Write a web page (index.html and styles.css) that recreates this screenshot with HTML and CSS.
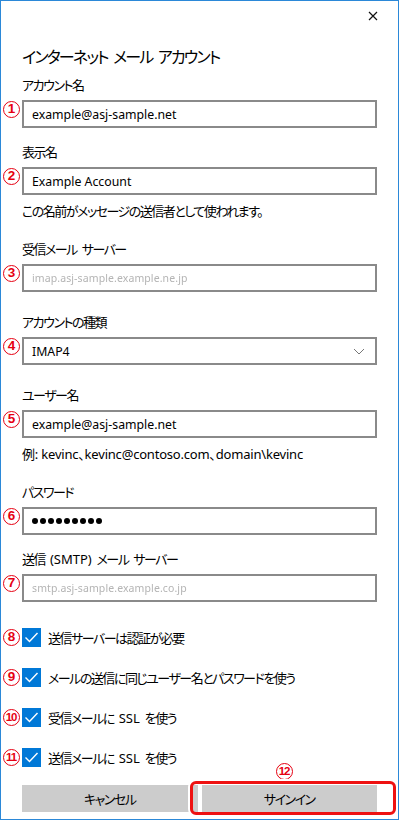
FILE: index.html
```html
<!DOCTYPE html>
<html>
    <head>
        <title>インターネット メール アカウント</title>
        <meta name="viewport" content="width=device-width, initial-scale=1.0">
        <link rel="stylesheet" href="styles.css">
    </head>
    <body>
        <div class="window">
            <div class="titlebar">
                <button class="close" aria-label="閉じる">
                    <svg width="10" height="10" viewBox="0 0 10 10"><path d="M1 1 L9 9 M9 1 L1 9" stroke="#111" stroke-width="1.2" fill="none"/></svg>
                </button>
            </div>
            <h1 class="title">インターネット メール アカウント</h1>

            <div class="field">
                <label class="label">アカウント名</label>
                <div class="box"><span class="mark">1</span><span class="value">example@asj-sample.net</span></div>
            </div>

            <div class="field">
                <label class="label">表示名</label>
                <div class="box"><span class="mark">2</span><span class="value">Example Account</span></div>
            </div>
            <p class="note">この名前がメッセージの送信者として使われます。</p>

            <div class="field">
                <label class="label">受信メール サーバー</label>
                <div class="box"><span class="mark">3</span><span class="value blurred">imap.asj-sample.example.ne.jp</span></div>
            </div>

            <div class="field loose">
                <label class="label">アカウントの種類</label>
                <div class="box select"><span class="mark">4</span><span class="value">IMAP4</span>
                    <svg class="chevron" width="12" height="7" viewBox="0 0 12 7"><path d="M1 1 L6 6 L11 1" stroke="#777" stroke-width="1" fill="none"/></svg>
                </div>
            </div>

            <div class="field loose">
                <label class="label">ユーザー名</label>
                <div class="box"><span class="mark">5</span><span class="value">example@asj-sample.net</span></div>
            </div>
            <p class="note hint">例: kevinc、kevinc@contoso.com、domain\kevinc</p>

            <div class="field">
                <label class="label">パスワード</label>
                <div class="box"><span class="mark">6</span>
                    <span class="dots"><i></i><i></i><i></i><i></i><i></i><i></i><i></i><i></i><i></i></span>
                </div>
            </div>

            <div class="field">
                <label class="label">送信 <span class="latin">(SMTP)</span> メール サーバー</label>
                <div class="box"><span class="mark">7</span><span class="value blurred">smtp.asj-sample.example.co.jp</span></div>
            </div>

            <div class="checks">
                <div class="check-row"><span class="mark">8</span><span class="check"><svg width="19" height="19" viewBox="0 0 19 19"><path d="M3.5 9.5 L7.5 13.5 L15.5 5" stroke="#fff" stroke-width="1.4" fill="none"/></svg></span>送信サーバーは認証が必要</div>
                <div class="check-row"><span class="mark">9</span><span class="check"><svg width="19" height="19" viewBox="0 0 19 19"><path d="M3.5 9.5 L7.5 13.5 L15.5 5" stroke="#fff" stroke-width="1.4" fill="none"/></svg></span>メールの送信に同じユーザー名とパスワードを使う</div>
                <div class="check-row"><span class="mark two">10</span><span class="check"><svg width="19" height="19" viewBox="0 0 19 19"><path d="M3.5 9.5 L7.5 13.5 L15.5 5" stroke="#fff" stroke-width="1.4" fill="none"/></svg></span>受信メールに&nbsp;<span class="latin">SSL</span>&nbsp;を使う</div>
                <div class="check-row"><span class="mark two">11</span><span class="check"><svg width="19" height="19" viewBox="0 0 19 19"><path d="M3.5 9.5 L7.5 13.5 L15.5 5" stroke="#fff" stroke-width="1.4" fill="none"/></svg></span>送信メールに&nbsp;<span class="latin">SSL</span>&nbsp;を使う</div>
            </div>

            <div class="actions">
                <button class="btn">キャンセル</button>
                <button class="btn">サインイン</button>
                <span class="mark two top">12</span>
                <span class="highlight"></span>
            </div>
        </div>
    </body>
</html>
```

FILE: styles.css
```css
* {
    box-sizing: border-box;
}

body {
    margin: 0;
    background-color: #fff;
    color: #000;
    font-family: "Noto Sans", "Noto Sans CJK JP", sans-serif;
}

.window {
    width: 399px;
    height: 820px;
    border: 1px solid #2b88d8;
    padding: 0 21px;
    font-feature-settings: "palt";
    letter-spacing: -1.5px;
    word-spacing: 3px;
}

.latin {
    letter-spacing: 0;
}

.titlebar {
    height: 30px;
    display: flex;
    justify-content: flex-end;
    align-items: center;
    margin-right: -6px;
}

.close {
    width: 20px;
    height: 20px;
    padding: 0;
    border: none;
    background: none;
    display: flex;
    align-items: center;
    justify-content: center;
}

.title {
    margin: 13px 0 5px;
    font-size: 16px;
    line-height: 26px;
    font-weight: normal;
    letter-spacing: -1.8px;
}

.field {
    margin-top: 14px;
}

.title + .field {
    margin-top: 0;
}

.field.loose {
    margin-top: 20px;
}

.note + .field {
    margin-top: 18px;
}

.label {
    display: block;
    font-size: 13px;
    line-height: 20px;
}

.box {
    position: relative;
    margin-top: 5px;
    height: 28px;
    border: 2px solid #8a8a8a;
    padding: 0 8px;
    display: flex;
    align-items: center;
    font-size: 12.3px;
    letter-spacing: 0;
    word-spacing: 0;
}

.select {
    justify-content: space-between;
    padding-right: 10px;
}

.blurred {
    color: #b4b4b4;
    font-size: 10.5px;
    letter-spacing: 0.1px;
    filter: blur(0.7px);
}

.dots {
    display: flex;
    gap: 2px;
}

.dots i {
    width: 6px;
    height: 6px;
    border-radius: 50%;
    background-color: #000;
}

.note {
    margin: 6px 0 0;
    font-size: 13px;
    line-height: 20px;
}

.note.hint {
    letter-spacing: -0.2px;
    word-spacing: 0;
}

.mark {
    position: absolute;
    left: -21px;
    top: -1px;
    width: 17px;
    height: 17px;
    border: 1.5px solid #e60012;
    border-radius: 50%;
    background-color: #fff;
    color: #e60012;
    font: bold 13.5px/14px "Liberation Sans", sans-serif;
    letter-spacing: 0;
    text-align: center;
}

.mark.two {
    font-size: 11.5px;
    letter-spacing: -1.2px;
    text-indent: -1px;
}

.checks {
    margin-top: 26px;
    display: flex;
    flex-direction: column;
    gap: 21px;
}

.check-row {
    position: relative;
    height: 19px;
    display: flex;
    align-items: center;
    font-size: 13px;
    white-space: pre;
}

.check-row .mark {
    left: -19px;
    top: 1px;
}

.check {
    width: 19px;
    height: 19px;
    margin-right: 7px;
    background-color: #0078d7;
}

.check svg {
    display: block;
}

.actions {
    position: relative;
    margin-top: 18px;
    display: flex;
    gap: 4px;
}

.btn {
    flex: 1;
    height: 27px;
    border: none;
    background-color: #ccc;
    color: #000;
    font-family: inherit;
    font-size: 13px;
    letter-spacing: -1.5px;
    font-feature-settings: "palt";
}

.actions .mark.top {
    left: 254px;
    top: -22px;
}

.highlight {
    position: absolute;
    left: 168px;
    top: -4px;
    width: 206px;
    height: 34px;
    border: 3px solid #ee1111;
    border-radius: 6px;
    box-shadow: 0 0 0 2px #fff;
}
```
